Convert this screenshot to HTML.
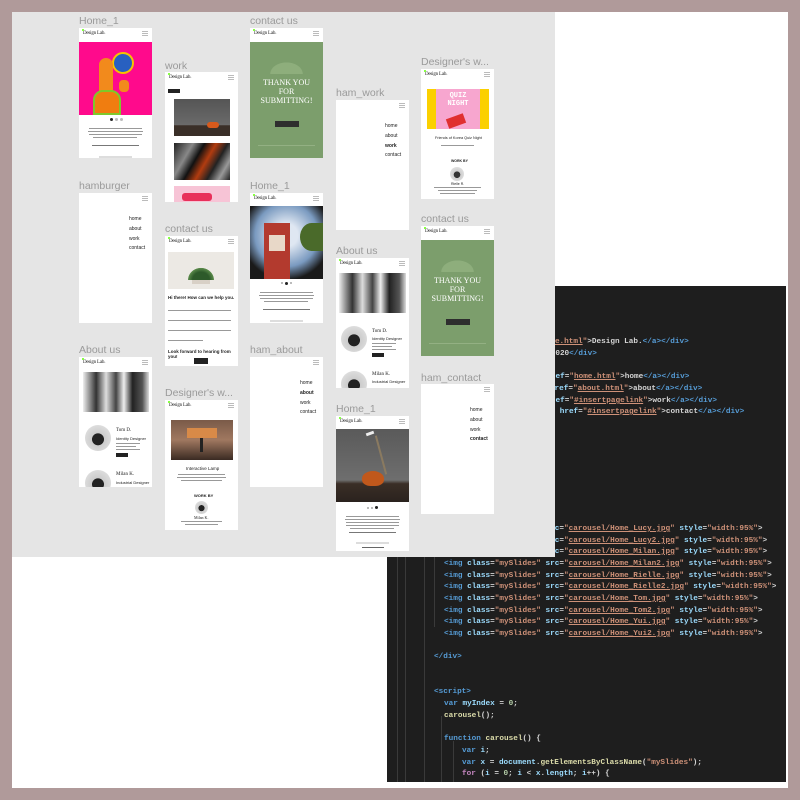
<!DOCTYPE html>
<html><head><meta charset="utf-8"><style>
*{margin:0;padding:0;box-sizing:border-box}
body{width:800px;height:800px;background:#b09a9a;position:relative;overflow:hidden;font-family:"Liberation Sans",sans-serif}
.a{position:absolute}
#white{left:12px;top:12px;width:776px;height:776px;background:#fff}
#ed{left:387px;top:286px;width:399px;height:496px;background:#1e1e1e;overflow:hidden}
.g{position:absolute;top:0;bottom:0;width:1px;background:#3a3a3a}
.cl{position:absolute;white-space:pre;font-family:"Liberation Mono",monospace;font-size:7.7px;font-weight:bold;color:#d4d4d4;line-height:10px}
.t{color:#569cd6}.at{color:#9cdcfe}.s{color:#ce9178;text-decoration:underline}.q{color:#ce9178}.n{color:#b5cea8}.f{color:#dcdcaa}.k{color:#c586c0}
#cv{left:12px;top:12px;width:543px;height:545px;background:#e5e5e5;overflow:hidden}
.lb{position:absolute;font-size:10.5px;color:#9a9a9a;white-space:nowrap;line-height:10px}
.fr{position:absolute;width:73px;background:#fff;overflow:hidden}
.hd{position:absolute;left:4px;top:3px;font-family:"Liberation Serif",serif;font-size:5px;color:#222;letter-spacing:-0.2px}
.hd:before{content:"";position:absolute;left:-1px;top:-2px;width:2px;height:2px;background:#8f4}
.hb{position:absolute;right:4px;top:3px;width:6px;height:5px;border-top:1px solid #bbb;border-bottom:1px solid #bbb}
.hb:after{content:"";position:absolute;left:0;right:0;top:1px;height:1px;background:#bbb}
.m{position:absolute;font-size:5px;color:#222;line-height:5px}
.tx{position:absolute;height:1px;background:#999}
.bt{position:absolute;background:#222}
.dk{position:absolute;font-family:"Liberation Serif",serif;color:#fff;text-align:center;font-size:8px;line-height:9px;width:73px;left:0}
</style></head><body>
<div id="white" class="a"></div>
<div id="ed" class="a">
<div class="g" style="left:10px"></div><div class="g" style="left:18px"></div><div class="g" style="left:37px"></div><div class="g" style="left:54px;top:430px"></div><div class="g" style="left:47px;top:250px;bottom:155px"></div><div class="g" style="left:66px;top:455px"></div>
<div class="cl" style="left:11px;top:51px">    <span class="t">&lt;div</span> <span class="at">class</span>=<span class="q">"logo"</span>&gt;<span class="t">&lt;a</span> <span class="at">href</span>=<span class="q">"</span><span class="s">home.html</span><span class="q">"</span>&gt;Design Lab.<span class="t">&lt;/a&gt;&lt;/div&gt;</span></div>
<div class="cl" style="left:53px;top:63px">                       ©2020<span class="t">&lt;/div&gt;</span></div>
<div class="cl" style="left:67px;top:86px">                    <span class="at">href</span>=<span class="q">"</span><span class="s">home.html</span><span class="q">"</span>&gt;home<span class="t">&lt;/a&gt;&lt;/div&gt;</span></div>
<div class="cl" style="left:66px;top:98px">                     <span class="at">href</span>=<span class="q">"</span><span class="s">about.html</span><span class="q">"</span>&gt;about<span class="t">&lt;/a&gt;&lt;/div&gt;</span></div>
<div class="cl" style="left:67px;top:110px">                    <span class="at">href</span>=<span class="q">"</span><span class="s">#insertpagelink</span><span class="q">"</span>&gt;work<span class="t">&lt;/a&gt;&lt;/div&gt;</span></div>
<div class="cl" style="left:62px;top:121px">                        <span class="at">href</span>=<span class="q">"</span><span class="s">#insertpagelink</span><span class="q">"</span>&gt;contact<span class="t">&lt;/a&gt;&lt;/div&gt;</span></div>
<div class="cl" style="left:57px;top:238px"><span class="t">&lt;img</span> <span class="at">class</span>=<span class="q">"mySlides"</span> <span class="at">src</span>=<span class="q">"</span><span class="s">carousel/Home_Lucy.jpg</span><span class="q">"</span> <span class="at">style</span>=<span class="q">"width:95%"</span>&gt;</div>
<div class="cl" style="left:57px;top:250px"><span class="t">&lt;img</span> <span class="at">class</span>=<span class="q">"mySlides"</span> <span class="at">src</span>=<span class="q">"</span><span class="s">carousel/Home_Lucy2.jpg</span><span class="q">"</span> <span class="at">style</span>=<span class="q">"width:95%"</span>&gt;</div>
<div class="cl" style="left:57px;top:261px"><span class="t">&lt;img</span> <span class="at">class</span>=<span class="q">"mySlides"</span> <span class="at">src</span>=<span class="q">"</span><span class="s">carousel/Home_Milan.jpg</span><span class="q">"</span> <span class="at">style</span>=<span class="q">"width:95%"</span>&gt;</div>
<div class="cl" style="left:57px;top:273px"><span class="t">&lt;img</span> <span class="at">class</span>=<span class="q">"mySlides"</span> <span class="at">src</span>=<span class="q">"</span><span class="s">carousel/Home_Milan2.jpg</span><span class="q">"</span> <span class="at">style</span>=<span class="q">"width:95%"</span>&gt;</div>
<div class="cl" style="left:57px;top:285px"><span class="t">&lt;img</span> <span class="at">class</span>=<span class="q">"mySlides"</span> <span class="at">src</span>=<span class="q">"</span><span class="s">carousel/Home_Rielle.jpg</span><span class="q">"</span> <span class="at">style</span>=<span class="q">"width:95%"</span>&gt;</div>
<div class="cl" style="left:57px;top:296px"><span class="t">&lt;img</span> <span class="at">class</span>=<span class="q">"mySlides"</span> <span class="at">src</span>=<span class="q">"</span><span class="s">carousel/Home_Rielle2.jpg</span><span class="q">"</span> <span class="at">style</span>=<span class="q">"width:95%"</span>&gt;</div>
<div class="cl" style="left:57px;top:308px"><span class="t">&lt;img</span> <span class="at">class</span>=<span class="q">"mySlides"</span> <span class="at">src</span>=<span class="q">"</span><span class="s">carousel/Home_Tom.jpg</span><span class="q">"</span> <span class="at">style</span>=<span class="q">"width:95%"</span>&gt;</div>
<div class="cl" style="left:57px;top:320px"><span class="t">&lt;img</span> <span class="at">class</span>=<span class="q">"mySlides"</span> <span class="at">src</span>=<span class="q">"</span><span class="s">carousel/Home_Tom2.jpg</span><span class="q">"</span> <span class="at">style</span>=<span class="q">"width:95%"</span>&gt;</div>
<div class="cl" style="left:57px;top:331px"><span class="t">&lt;img</span> <span class="at">class</span>=<span class="q">"mySlides"</span> <span class="at">src</span>=<span class="q">"</span><span class="s">carousel/Home_Yui.jpg</span><span class="q">"</span> <span class="at">style</span>=<span class="q">"width:95%"</span>&gt;</div>
<div class="cl" style="left:57px;top:343px"><span class="t">&lt;img</span> <span class="at">class</span>=<span class="q">"mySlides"</span> <span class="at">src</span>=<span class="q">"</span><span class="s">carousel/Home_Yui2.jpg</span><span class="q">"</span> <span class="at">style</span>=<span class="q">"width:95%"</span>&gt;</div>
<div class="cl" style="left:47px;top:366px"><span class="t">&lt;/div&gt;</span></div>
<div class="cl" style="left:47px;top:401px"><span class="t">&lt;script&gt;</span></div>
<div class="cl" style="left:57px;top:413px"><span class="t">var</span> <span class="at">myIndex</span> = <span class="n">0</span>;</div>
<div class="cl" style="left:57px;top:425px"><span class="f">carousel</span>();</div>
<div class="cl" style="left:57px;top:448px"><span class="t">function</span> <span class="f">carousel</span>() {</div>
<div class="cl" style="left:75px;top:460px"><span class="t">var</span> <span class="at">i</span>;</div>
<div class="cl" style="left:75px;top:472px"><span class="t">var</span> <span class="at">x</span> = <span class="at">document</span>.<span class="f">getElementsByClassName</span>(<span class="q">"mySlides"</span>);</div>
<div class="cl" style="left:75px;top:483px"><span class="k">for</span> (<span class="at">i</span> = <span class="n">0</span>; <span class="at">i</span> &lt; <span class="at">x</span>.<span class="at">length</span>; <span class="at">i</span>++) {</div>
</div>

<div id="cv" class="a">
<div class="lb" style="left:67px;top:4px">Home_1</div>
<div class="fr" style="left:67px;top:16px;height:130px">
 <div class="hd">Design Lab.</div><div class="hb"></div>
 <div class="a" style="left:0;top:14px;width:73px;height:73px;background:#ff0a8c"></div>
 <div class="a" style="left:33px;top:24px;width:22px;height:22px;border-radius:50%;background:#2860c0;border:2px solid #f5c400"></div>
 <div class="a" style="left:20px;top:30px;width:14px;height:50px;border-radius:8px 8px 0 0;background:#f28a1c"></div>
 <div class="a" style="left:14px;top:62px;width:28px;height:25px;border-radius:10px 10px 0 0;background:#f07d10;border:2px solid #7ec82a"></div>
 <div class="a" style="left:40px;top:52px;width:10px;height:12px;border-radius:4px;background:#f28a1c"></div>
 <div class="a" style="left:31px;top:90px;width:3px;height:3px;border-radius:50%;background:#222"></div><div class="a" style="left:36px;top:90px;width:3px;height:3px;border-radius:50%;background:#bbb"></div><div class="a" style="left:41px;top:90px;width:3px;height:3px;border-radius:50%;background:#bbb"></div>
 <div class="tx" style="left:10px;top:100px;width:53px"></div><div class="tx" style="left:9px;top:103px;width:55px"></div><div class="tx" style="left:10px;top:106px;width:53px"></div><div class="tx" style="left:14px;top:109px;width:44px"></div>
 <div class="tx" style="left:13px;top:117px;width:47px;background:#777"></div>
 <div class="tx" style="left:20px;top:128px;width:33px;height:2px;background:#ddd"></div>
</div>
<div class="lb" style="left:67px;top:169px">hamburger</div>
<div class="fr" style="left:67px;top:181px;height:130px"><div class="hb"></div>
 <div class="m" style="left:50px;top:24px">home</div><div class="m" style="left:50px;top:34px">about</div><div class="m" style="left:50px;top:44px">work</div><div class="m" style="left:50px;top:53px">contact</div></div>
<div class="lb" style="left:67px;top:333px">About us</div>
<div class="fr" style="left:67px;top:345px;height:130px">
 <div class="hd">Design Lab.</div><div class="hb"></div>
 <div class="a" style="left:4px;top:15px;width:66px;height:40px;background:linear-gradient(90deg,#eee,#333 20%,#ddd 35%,#444 50%,#eee 62%,#222 75%,#555 90%,#ddd)"></div>
 <div class="a" style="left:6px;top:68px;width:26px;height:26px;border-radius:50%;background:radial-gradient(circle at 50% 55%,#222 30%,#ccc 32%,#e8e8e8)"></div>
 <div class="m" style="left:37px;top:71px;font-family:'Liberation Serif',serif">Tom D.</div><div class="m" style="left:37px;top:79px;font-size:4px">Identity Designer</div>
 <div class="tx" style="left:37px;top:86px;width:24px"></div><div class="tx" style="left:37px;top:89px;width:20px"></div><div class="tx" style="left:37px;top:92px;width:24px"></div>
 <div class="bt" style="left:37px;top:96px;width:12px;height:4px"></div>
 <div class="a" style="left:6px;top:113px;width:26px;height:26px;border-radius:50%;background:radial-gradient(circle at 50% 55%,#222 30%,#ccc 32%,#e8e8e8)"></div>
 <div class="m" style="left:37px;top:115px;font-family:'Liberation Serif',serif">Milan K.</div><div class="m" style="left:37px;top:123px;font-size:4px">Industrial Designer</div>
</div>
<div class="lb" style="left:153px;top:49px">work</div>
<div class="fr" style="left:153px;top:60px;height:130px">
 <div class="hd">Design Lab.</div><div class="hb"></div>
 <div class="bt" style="left:3px;top:17px;width:12px;height:4px"></div>
 <div class="a" style="left:9px;top:27px;width:56px;height:37px;background:linear-gradient(180deg,#555 0,#6a6a6a 70%,#3a2f28 72%)"></div>
 <div class="a" style="left:42px;top:50px;width:12px;height:6px;border-radius:6px;background:#d85a1c"></div>
 <div class="a" style="left:9px;top:71px;width:56px;height:37px;background:linear-gradient(120deg,#222,#888 25%,#111 40%,#b23c10 55%,#222 70%,#999 85%,#222)"></div>
 <div class="a" style="left:9px;top:114px;width:56px;height:20px;background:#f7c4d6"></div>
 <div class="a" style="left:17px;top:121px;width:30px;height:8px;background:#e8305a;border-radius:3px"></div>
</div>
<div class="lb" style="left:153px;top:212px">contact us</div>
<div class="fr" style="left:153px;top:224px;height:130px">
 <div class="hd">Design Lab.</div><div class="hb"></div>
 <div class="a" style="left:3px;top:16px;width:66px;height:37px;background:#ece9e4"></div>
 <div class="a" style="left:21px;top:30px;width:30px;height:14px;background:radial-gradient(ellipse at 50% 100%,#2d5a2a 40%,#5a8a4a 60%,transparent 62%)"></div>
 <div class="a" style="left:27px;top:44px;width:18px;height:4px;background:#d8d0c6"></div>
 <div class="m" style="left:3px;top:59px;font-weight:bold;font-size:4.5px">Hi there! How can we help you.</div>
 <div class="tx" style="left:3px;top:74px;width:63px"></div><div class="tx" style="left:3px;top:84px;width:63px"></div><div class="tx" style="left:3px;top:94px;width:63px"></div><div class="tx" style="left:3px;top:104px;width:35px"></div>
 <div class="m" style="left:3px;top:113px;font-weight:bold;font-size:4.5px">Look forward to hearing from you!</div>
 <div class="bt" style="left:29px;top:122px;width:14px;height:6px"></div>
</div>
<div class="lb" style="left:153px;top:376px">Designer's w...</div>
<div class="fr" style="left:153px;top:388px;height:130px">
 <div class="hd">Design Lab.</div><div class="hb"></div>
 <div class="a" style="left:6px;top:20px;width:62px;height:40px;background:linear-gradient(180deg,#7a5a48,#a07860 50%,#3a2a22)"></div>
 <div class="a" style="left:22px;top:28px;width:30px;height:10px;background:#d88a48"></div>
 <div class="a" style="left:35px;top:38px;width:3px;height:14px;background:#222"></div>
 <div class="m" style="left:21px;top:66px;font-size:4.5px">Interactive Lamp</div>
 <div class="tx" style="left:13px;top:74px;width:47px"></div><div class="tx" style="left:12px;top:77px;width:49px"></div><div class="tx" style="left:16px;top:80px;width:41px"></div>
 <div class="m" style="left:29px;top:93px;font-size:4px;font-weight:bold">WORK BY</div>
 <div class="a" style="left:30px;top:101px;width:13px;height:13px;border-radius:50%;background:radial-gradient(circle at 50% 55%,#222 30%,#ccc 33%,#e8e8e8)"></div>
 <div class="m" style="left:29px;top:115px;font-size:4px;font-family:'Liberation Serif',serif">Milan K.</div>
 <div class="tx" style="left:16px;top:121px;width:41px"></div><div class="tx" style="left:20px;top:124px;width:33px"></div>
</div>
<div class="lb" style="left:238px;top:4px">contact us</div>
<div class="fr" style="left:238px;top:16px;height:130px">
 <div class="hd">Design Lab.</div><div class="hb"></div>
 <div class="a" style="left:0;top:14px;width:73px;height:116px;background:#7c9e6c"></div>
 <div class="a" style="left:14px;top:30px;width:45px;height:16px;background:radial-gradient(ellipse at 50% 100%,#8eae7c 50%,transparent 52%)"></div>
 <div class="dk" style="top:50px">THANK YOU<br>FOR<br>SUBMITTING!</div>
 <div class="bt" style="left:25px;top:93px;width:24px;height:6px;background:#2e2e2e"></div>
 <div class="tx" style="left:8px;top:117px;width:57px;background:#93b083"></div>
</div>
<div class="lb" style="left:238px;top:169px">Home_1</div>
<div class="fr" style="left:238px;top:181px;height:130px">
 <div class="hd">Design Lab.</div><div class="hb"></div>
 <div class="a" style="left:0;top:13px;width:73px;height:73px;background:radial-gradient(circle at 50% 40%,#dfe7f2 20%,#7a9ac0 55%,#1a1a1a 78%)"></div>
 <div class="a" style="left:14px;top:30px;width:26px;height:56px;background:#b33a2e"></div>
 <div class="a" style="left:19px;top:42px;width:16px;height:16px;background:#e8d8c8"></div>
 <div class="a" style="left:50px;top:30px;width:23px;height:28px;border-radius:50% 0 0 50%;background:#4a6a2a"></div>
 <div class="a" style="left:31px;top:89px;width:2px;height:2px;background:#bbb"></div><div class="a" style="left:35px;top:89px;width:3px;height:3px;border-radius:50%;background:#222"></div><div class="a" style="left:40px;top:89px;width:2px;height:2px;background:#bbb"></div>
 <div class="tx" style="left:10px;top:99px;width:53px"></div><div class="tx" style="left:9px;top:102px;width:55px"></div><div class="tx" style="left:10px;top:105px;width:53px"></div><div class="tx" style="left:14px;top:108px;width:44px"></div>
 <div class="tx" style="left:13px;top:116px;width:47px;background:#777"></div>
 <div class="tx" style="left:20px;top:127px;width:33px;height:2px;background:#ddd"></div>
</div>
<div class="lb" style="left:238px;top:333px">ham_about</div>
<div class="fr" style="left:238px;top:345px;height:130px"><div class="hb"></div>
 <div class="m" style="left:50px;top:24px">home</div><div class="m" style="left:50px;top:34px;font-weight:bold">about</div><div class="m" style="left:50px;top:44px">work</div><div class="m" style="left:50px;top:53px">contact</div></div>
<div class="lb" style="left:324px;top:76px">ham_work</div>
<div class="fr" style="left:324px;top:88px;height:130px"><div class="hb"></div>
 <div class="m" style="left:49px;top:24px">home</div><div class="m" style="left:49px;top:34px">about</div><div class="m" style="left:49px;top:44px;font-weight:bold">work</div><div class="m" style="left:49px;top:53px">contact</div></div>
<div class="lb" style="left:324px;top:234px">About us</div>
<div class="fr" style="left:324px;top:246px;height:130px">
 <div class="hd">Design Lab.</div><div class="hb"></div>
 <div class="a" style="left:3px;top:15px;width:67px;height:40px;background:linear-gradient(90deg,#eee,#333 20%,#ddd 35%,#444 50%,#eee 62%,#222 75%,#555 90%,#ddd)"></div>
 <div class="a" style="left:5px;top:68px;width:26px;height:26px;border-radius:50%;background:radial-gradient(circle at 50% 55%,#222 30%,#ccc 32%,#e8e8e8)"></div>
 <div class="m" style="left:36px;top:71px;font-family:'Liberation Serif',serif">Tom D.</div><div class="m" style="left:36px;top:78px;font-size:4px">Identity Designer</div>
 <div class="tx" style="left:36px;top:85px;width:24px"></div><div class="tx" style="left:36px;top:88px;width:20px"></div><div class="tx" style="left:36px;top:91px;width:24px"></div>
 <div class="bt" style="left:36px;top:95px;width:12px;height:4px"></div>
 <div class="a" style="left:5px;top:113px;width:26px;height:26px;border-radius:50%;background:radial-gradient(circle at 50% 55%,#222 30%,#ccc 32%,#e8e8e8)"></div>
 <div class="m" style="left:36px;top:114px;font-family:'Liberation Serif',serif">Milan K.</div><div class="m" style="left:36px;top:121px;font-size:4px">Industrial Designer</div>
</div>
<div class="lb" style="left:324px;top:392px">Home_1</div>
<div class="fr" style="left:324px;top:404px;height:135px">
 <div class="hd">Design Lab.</div><div class="hb"></div>
 <div class="a" style="left:0;top:13px;width:73px;height:73px;background:linear-gradient(180deg,#5a5a5a,#6e6e6e 70%,#3a2e26 75%,#2a221e)"></div>
 <div class="a" style="left:30px;top:16px;width:8px;height:3px;background:#eee;transform:rotate(-20deg)"></div>
 <div class="a" style="left:44px;top:19px;width:2px;height:40px;background:#8a7a60;transform:rotate(-15deg)"></div>
 <div class="a" style="left:26px;top:55px;width:22px;height:15px;border-radius:50% 50% 40% 40%;background:#c0581c"></div>
 <div class="a" style="left:31px;top:91px;width:2px;height:2px;background:#bbb"></div><div class="a" style="left:35px;top:91px;width:2px;height:2px;background:#bbb"></div><div class="a" style="left:39px;top:90px;width:3px;height:3px;border-radius:50%;background:#222"></div>
 <div class="tx" style="left:10px;top:100px;width:53px"></div><div class="tx" style="left:9px;top:103px;width:55px"></div><div class="tx" style="left:10px;top:106px;width:53px"></div><div class="tx" style="left:10px;top:109px;width:53px"></div><div class="tx" style="left:14px;top:112px;width:44px"></div>
 <div class="tx" style="left:13px;top:116px;width:47px;background:#777"></div>
 <div class="tx" style="left:20px;top:126px;width:33px;height:2px;background:#ddd"></div>
 <div class="tx" style="left:26px;top:131px;width:22px;background:#666"></div>
</div>
<div class="lb" style="left:409px;top:45px">Designer's w...</div>
<div class="fr" style="left:409px;top:57px;height:130px">
 <div class="hd">Design Lab.</div><div class="hb"></div>
 <div class="a" style="left:6px;top:20px;width:62px;height:40px;background:#fbd000"></div>
 <div class="a" style="left:15px;top:20px;width:44px;height:40px;background:#f7a6cf"></div>
 <div class="a" style="left:15px;top:23px;width:44px;font-size:7px;font-weight:bold;color:#fff;text-align:center;line-height:8px;font-family:'Liberation Mono',monospace">QUIZ<br>NIGHT</div>
 <div class="a" style="left:26px;top:47px;width:18px;height:10px;background:#e03030;transform:rotate(-20deg)"></div>
 <div class="m" style="left:14px;top:67px;font-size:3.8px">Friends of Korea Quiz Night</div>
 <div class="tx" style="left:20px;top:76px;width:33px"></div>
 <div class="m" style="left:30px;top:90px;font-size:3.5px;font-weight:bold">WORK BY</div>
 <div class="a" style="left:29px;top:98px;width:14px;height:14px;border-radius:50%;background:radial-gradient(circle at 50% 55%,#333 30%,#ccc 33%,#eee)"></div>
 <div class="m" style="left:30px;top:113px;font-size:3.5px">Rielle R.</div>
 <div class="tx" style="left:13px;top:118px;width:47px"></div><div class="tx" style="left:17px;top:121px;width:39px"></div><div class="tx" style="left:19px;top:124px;width:35px"></div>
</div>
<div class="lb" style="left:409px;top:202px">contact us</div>
<div class="fr" style="left:409px;top:214px;height:130px">
 <div class="hd">Design Lab.</div><div class="hb"></div>
 <div class="a" style="left:0;top:14px;width:73px;height:116px;background:#7c9e6c"></div>
 <div class="a" style="left:14px;top:30px;width:45px;height:16px;background:radial-gradient(ellipse at 50% 100%,#8eae7c 50%,transparent 52%)"></div>
 <div class="dk" style="top:50px">THANK YOU<br>FOR<br>SUBMITTING!</div>
 <div class="bt" style="left:25px;top:93px;width:24px;height:6px;background:#2e2e2e"></div>
 <div class="tx" style="left:8px;top:117px;width:57px;background:#93b083"></div>
</div>
<div class="lb" style="left:409px;top:361px">ham_contact</div>
<div class="fr" style="left:409px;top:372px;height:130px"><div class="hb"></div>
 <div class="m" style="left:49px;top:24px">home</div><div class="m" style="left:49px;top:34px">about</div><div class="m" style="left:49px;top:44px">work</div><div class="m" style="left:49px;top:53px;font-weight:bold">contact</div></div>
</div>
</body></html>
